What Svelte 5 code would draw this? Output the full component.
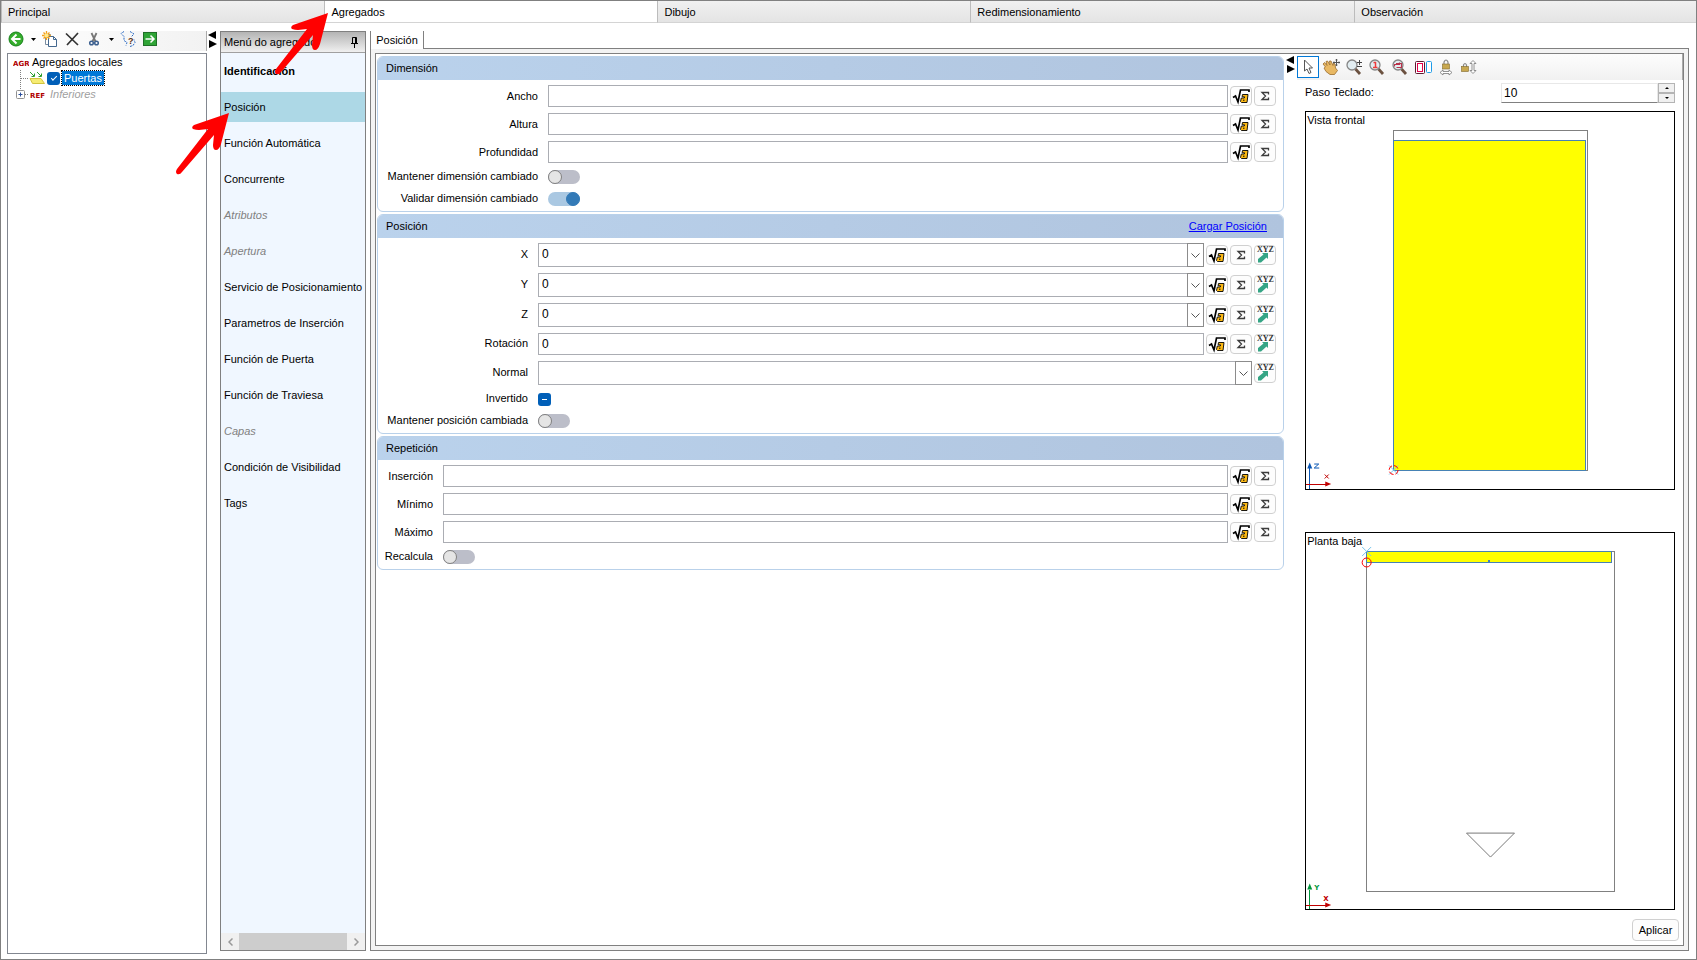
<script>
  const tabs = [
    { name: 'Principal', size: 323 },
    { name: 'Agregados', size: 333 },
    { name: 'Dibujo', size: 312 },
    { name: 'Redimensionamiento', size: 386 },
    { name: 'Observación', size: 342 }
  ];

  const menu = [
    { name: 'Identificación', bold: true },
    { name: 'Posición' },
    { name: 'Función Automática' },
    { name: 'Concurrente' },
    { name: 'Atributos', disabled: true },
    { name: 'Apertura', disabled: true },
    { name: 'Servicio de Posicionamiento' },
    { name: 'Parametros de Inserción' },
    { name: 'Función de Puerta' },
    { name: 'Función de Traviesa' },
    { name: 'Capas', disabled: true },
    { name: 'Condición de Visibilidad' },
    { name: 'Tags' }
  ];

  // type: text, combo, toggle or check
  const dimension = [
    { id: 'ancho', label: 'Ancho', type: 'text', value: '', tools: ['root', 'sum'] },
    { id: 'altura', label: 'Altura', type: 'text', value: '', tools: ['root', 'sum'] },
    { id: 'profundidad', label: 'Profundidad', type: 'text', value: '', tools: ['root', 'sum'] },
    { id: 'mantener-dim', label: 'Mantener dimensión cambiado', type: 'toggle', value: false },
    { id: 'validar-dim', label: 'Validar dimensión cambiado', type: 'toggle', value: true }
  ];

  const position = [
    { id: 'x', label: 'X', type: 'combo', value: '0', tools: ['root', 'sum', 'xyz'] },
    { id: 'y', label: 'Y', type: 'combo', value: '0', tools: ['root', 'sum', 'xyz'] },
    { id: 'z', label: 'Z', type: 'combo', value: '0', tools: ['root', 'sum', 'xyz'] },
    { id: 'rotacion', label: 'Rotación', type: 'text', value: '0', tools: ['root', 'sum', 'xyz'] },
    { id: 'normal', label: 'Normal', type: 'combo', value: '', tools: ['xyz'] },
    { id: 'invertido', label: 'Invertido', type: 'check' },
    { id: 'mantener-pos', label: 'Mantener posición cambiada', type: 'toggle', value: false }
  ];

  const repetition = [
    { id: 'insercion', label: 'Inserción', type: 'text', value: '', tools: ['root', 'sum'] },
    { id: 'minimo', label: 'Mínimo', type: 'text', value: '', tools: ['root', 'sum'] },
    { id: 'maximo', label: 'Máximo', type: 'text', value: '', tools: ['root', 'sum'] },
    { id: 'recalcula', label: 'Recalcula', type: 'toggle', value: false }
  ];

  const toolNames = { root: 'Fórmula', sum: 'Sumatoria', xyz: 'Coordenadas' };
  const viewTools = ['pointer', 'hand', 'zoom', 'zoom-one', 'zoom-fit', 'panels', 'lock-x', 'lock-y'];

  let activeTab = $state('Agregados');
  let activeItem = $state('Posición');
  let activeTool = $state('pointer');
  let step = $state(10);
</script>

{#snippet toolIcon(tool)}
  {#if tool === 'root'}
    <svg width="18" height="18" viewBox="0 0 18 18">
      <path d="M1 10.500l2.500-1.500 2.500 6L8.500 3H17v2" fill="none" stroke="#000" stroke-width="1.700" />
      <path d="M10.500 7.500h5.500l-1 8H9.500l-1-1 .8-3.500h3l.3-1.200h-2.500z" fill="#fdb913" stroke="#000" stroke-width=".9" />
      <path d="M11 13.200h1.500" stroke="#000" />
    </svg>
  {:else if tool === 'sum'}
    <svg width="18" height="18" viewBox="0 0 18 18">
      <path d="M12.500 7.500V5.500H6L9.500 9L6 12.500H12.500V10.500" fill="none" stroke="#3c3c3c" stroke-width="1.300" />
    </svg>
  {:else}
    <svg width="20" height="18" viewBox="0 0 20 18">
      <path d="M7 7h6v6l-1.500-1.500L6 16.500H3V13l5.500-4.500z" fill="#35a585" />
      <text x="2" y="6" class="xyz">XYZ</text>
    </svg>
  {/if}
{/snippet}

{#snippet glass()}
  <path d="M10.500 11l4.500 5" stroke="#6b5140" stroke-width="2.800" />
  <circle cx="7" cy="7" r="5" fill="#e2edf1" stroke="#858585" stroke-width="1.300" />
{/snippet}

{#snippet viewIcon(name)}
  <svg width="18" height="18" viewBox="0 0 18 18">
    {#if name === 'pointer'}
      <path d="M5.500 2v11l2.500-2 2 4.500 2-1-2-4.500h3.500z" fill="#fff" stroke="#555" />
    {:else if name === 'hand'}
      <path d="M1 6l1.500-1.500L5 7.500 4 3.500 5.500 3 8 7 7.500 3 9 3l2 4.500L11.500 5 13 6l.5 4 2 2.500-3 4L8 16.500 4 13.500 2 10l1.500-1z" fill="#e8b863" stroke="#9a6c2c" stroke-width=".8" />
      <path d="M14.500 1v7M11 4.500h7M13.500 2h2M13.500 7h2M12 3.500v2M17 3.500v2" stroke="#555" />
    {:else if name === 'zoom'}
      {@render glass()}
      <path d="M12 4.500h5M14.500 2v5M12 8.500h5" stroke="#444" />
    {:else if name === 'zoom-one'}
      {@render glass()}
      <path d="M5.500 4.500H7.500V9M5 9.500h4.500" fill="none" stroke="#ee3b3b" stroke-width="1.500" />
    {:else if name === 'zoom-fit'}
      {@render glass()}
      <path d="M3.500 8.500v-2h5v-2M5.500 9.500h5v-4H5" fill="none" stroke="#b8324a" stroke-width="1.200" />
    {:else if name === 'panels'}
      <rect x="1.500" y="3.500" width="9" height="12" rx="1" fill="#fff" stroke="#5b1a30" />
      <rect x="3.500" y="5.500" width="5" height="8" fill="#fff" stroke="#e5004b" />
      <rect x="12.500" y="3.500" width="5" height="11" rx="1" fill="#fff" stroke="#1d9be8" />
    {:else if name === 'lock-x'}
      <path d="M7 6.500V4q2-4 4 0v2.500" fill="none" stroke="#888" stroke-width="1.200" />
      <rect x="5.500" y="6" width="7" height="5" fill="#c8a850" stroke="#80692c" stroke-width=".6" />
      <path d="M3 14.500l3-2.500v1.500h6V12l3 2.500-3 2.500v-1.500H6V17z" fill="#fff" stroke="#777" stroke-width=".8" />
    {:else}
      <path d="M3.500 9V7q1.500-3 3 0v2" fill="none" stroke="#888" stroke-width="1.200" />
      <rect x="1.500" y="8.500" width="7" height="5" fill="#c8a850" stroke="#80692c" stroke-width=".6" />
      <path d="M13 2.500l3 3h-2v7h2l-3 3-3-3h2v-7h-2z" fill="#fff" stroke="#777" stroke-width=".8" />
    {/if}
  </svg>
{/snippet}

{#snippet caret()}
  <svg width="5" height="3" viewBox="0 0 5 3"><path d="M0 0h5L2.500 3z" /></svg>
{/snippet}

{#snippet splitter()}
  <svg width="9" height="18" viewBox="0 0 9 18"><path d="M8 0v8L0 4zM1 9v8l8-4z" /></svg>
{/snippet}

{#snippet rows(list)}
  {#each list as row}
    <div class="row {row.type}">
      <label for={row.id}>{row.label}</label>
      {#if row.type === 'text'}
        <input id={row.id} type="text" value={row.value} />
      {:else if row.type === 'combo'}
        <div class="select">
          <select id={row.id}>
            <option>{row.value}</option>
          </select>
          <span class="drop">
            <svg width="9" height="5" viewBox="0 0 9 5"><path d="M.5.5l4 4 4-4" fill="none" stroke="#555" /></svg>
          </span>
        </div>
      {:else if row.type === 'toggle'}
        <input id={row.id} class="switch" type="checkbox" role="switch" checked={row.value} />
      {:else}
        <input id={row.id} class="tri" type="checkbox" indeterminate />
      {/if}
      {#each row.tools ?? [] as tool}
        <button type="button" class="tool" aria-label={toolNames[tool]}>{@render toolIcon(tool)}</button>
      {/each}
    </div>
  {/each}
{/snippet}

<div class="app">
  <nav class="tabs">
    {#each tabs as tab}
      <button class:active={activeTab === tab.name} style="flex-grow: {tab.size}" onclick={() => (activeTab = tab.name)}>{tab.name}</button>
    {/each}
  </nav>

  <div class="body">
    <aside class="left">
      <div class="toolbar">
        <button aria-label="Volver">
          <svg width="16" height="16" viewBox="0 0 16 16">
            <circle cx="8" cy="8" r="7" fill="#35ad2c" stroke="#16801a" />
            <path d="M8.500 3.500L4 8l4.500 4.500M4 8h8.500" fill="none" stroke="#fff" stroke-width="2" />
          </svg>
        </button>
        <button class="caret" aria-label="Opciones de volver">{@render caret()}</button>
        <button aria-label="Nuevo">
          <svg width="16" height="16" viewBox="0 0 16 16">
            <path d="M3.500 3.500h5v10h-5z" fill="#fff" stroke="#7a8ca0" />
            <path d="M6.500 5.500h5l3 3v7h-8z" fill="#fff" stroke="#44688f" />
            <path d="M11.500 5.500v3h3" fill="none" stroke="#44688f" />
            <path d="M4.500 0v9M0 4.500h9M1.500 1.500l6 6M7.500 1.500l-6 6" stroke="#f3a01c" stroke-width="1.300" />
            <circle cx="4.500" cy="4.500" r="2" fill="#ffe98a" />
          </svg>
        </button>
        <button aria-label="Eliminar">
          <svg width="16" height="16" viewBox="0 0 16 16">
            <path d="M2 2.500l12 11.500M14 2L3 14" fill="none" stroke="#333" stroke-width="1.700" />
          </svg>
        </button>
        <button aria-label="Cortar">
          <svg width="16" height="16" viewBox="0 0 16 16">
            <path d="M5.500 2l4 8.500M10.500 2l-4 8.500" stroke="#777" stroke-width="1.800" />
            <circle cx="5.500" cy="12" r="1.800" fill="none" stroke="#3b5f8f" stroke-width="1.500" />
            <circle cx="10.500" cy="12" r="1.800" fill="none" stroke="#3b5f8f" stroke-width="1.500" />
          </svg>
        </button>
        <button class="caret" aria-label="Opciones de cortar">{@render caret()}</button>
        <button aria-label="Expresión">
          <svg width="16" height="16" viewBox="0 0 16 16">
            <path d="M4 .5L1 2.500l3 3v4l3 2-1 3M10 .5l4 2.500-3 3" fill="none" stroke="#2869c4" stroke-dasharray="2 1" />
            <path d="M10 15.500l3-1 2-3-1-3" fill="none" stroke="#2869c4" stroke-dasharray="2 1" />
            <text x="8" y="13" class="ask">?</text>
          </svg>
        </button>
        <button aria-label="Avanzar">
          <svg width="16" height="16" viewBox="0 0 16 16">
            <rect x="1.500" y="1.500" width="13" height="13" fill="#2fa436" stroke="#1f6f27" />
            <path d="M3.500 8h8M8.500 4.500L12 8l-3.500 3.500" fill="none" stroke="#fff" stroke-width="1.500" />
          </svg>
        </button>
      </div>

      <div class="tree">
        <div class="node">
          <svg width="16" height="16" viewBox="0 0 16 16"><text x="0" y="12" class="tag">AGR</text></svg>
          <span>Agregados locales</span>
        </div>
        <div class="node child">
          <svg width="12" height="16" viewBox="0 0 12 16"><path d="M4.500 0v16M5 8.500h7" fill="none" stroke="#808080" stroke-dasharray="1 1" /></svg>
          <svg width="16" height="16" viewBox="0 0 16 16">
            <path d="M1 8.500h11l3.500 5h-12z" fill="#f6ec72" stroke="#d2c440" />
            <path d="M1 2l4 4M2.500 6.500H5.500V3.500M8 2l4 4M9.500 6.500h3V3.500" fill="none" stroke="#2e9e2e" />
          </svg>
          <input id="puertas" type="checkbox" class="tick" checked />
          <label for="puertas" class="selected">Puertas</label>
        </div>
        <div class="node child">
          <svg width="13" height="16" viewBox="0 0 13 16">
            <path d="M4.500 0v4M9 8.500h4" fill="none" stroke="#808080" stroke-dasharray="1 1" />
            <rect x=".5" y="4.500" width="8" height="8" rx="1" fill="#fff" stroke="#919191" />
            <path d="M2.500 8.500h4M4.500 6.500v4" stroke="#2b4f9c" />
          </svg>
          <svg width="17" height="16" viewBox="0 0 17 16"><text x="0" y="12" class="tag">REF</text></svg>
          <span class="muted">Inferiores</span>
        </div>
      </div>
    </aside>

    <div class="splitter">{@render splitter()}</div>

    <aside class="menu">
      <header>
        <span>Menú do agregado</span>
        <button aria-label="Fijar">
          <svg width="9" height="11" viewBox="0 0 9 11"><path d="M2.500 6V.5h4V6M5.500 1v5M1 6.500h7M4.500 7v4" fill="none" stroke="#000" /></svg>
        </button>
      </header>
      <ul>
        {#each menu as item}
          <li>
            <button
              class:active={activeItem === item.name}
              class:bold={item.bold}
              disabled={item.disabled}
              onclick={() => (activeItem = item.name)}>{item.name}</button>
          </li>
        {/each}
      </ul>
      <div class="scroll">
        <button aria-label="Izquierda"><svg width="5" height="8" viewBox="0 0 5 8"><path d="M4.500.5L1 4l3.500 3.500" fill="none" stroke="#999" stroke-width="1.500" /></svg></button>
        <span></span>
        <button aria-label="Derecha"><svg width="5" height="8" viewBox="0 0 5 8"><path d="M.5.5L4 4 .5 7.500" fill="none" stroke="#999" stroke-width="1.500" /></svg></button>
      </div>
    </aside>

    <main>
      <div class="subtabs">
        <button>Posición</button>
        <span></span>
      </div>
      <div class="frame">
        <div class="inner">
          <form>
            <section class="wide">
              <h2>Dimensión</h2>
              <div class="rows">{@render rows(dimension)}</div>
            </section>
            <section class="mid">
              <h2>Posición <a href="#cargar">Cargar Posición</a></h2>
              <div class="rows">{@render rows(position)}</div>
            </section>
            <section class="narrow">
              <h2>Repetición</h2>
              <div class="rows">{@render rows(repetition)}</div>
            </section>
          </form>

          <div class="splitter inside">{@render splitter()}</div>

          <div class="preview">
            <div class="view-tools">
              {#each viewTools as name}
                <button class:active={activeTool === name} aria-label={name} onclick={() => (activeTool = name)}>{@render viewIcon(name)}</button>
              {/each}
            </div>
            <div class="views">
              <div class="step">
                <label for="step">Paso Teclado:</label>
                <input id="step" type="number" bind:value={step} />
                <div class="spin">
                  <button aria-label="Aumentar" onclick={() => step++}><svg width="4" height="2" viewBox="0 0 4 2"><path d="M0 2h4L2 0z" /></svg></button>
                  <button aria-label="Disminuir" onclick={() => step--}><svg width="4" height="2" viewBox="0 0 4 2"><path d="M0 0h4L2 2z" /></svg></button>
                </div>
              </div>

              <div class="view">
                <svg viewBox="1 1 368 377">
                  <text x="2" y="13" class="title">Vista frontal</text>
                  <g shape-rendering="crispEdges" fill="none">
                    <rect x="88.500" y="19.500" width="194" height="340" stroke="#808080" />
                    <rect x="88.500" y="29.500" width="192" height="330" fill="#ff0" stroke="#4682b4" />
                    <path d="M4.500 378V355" stroke="#0a56b4" />
                    <path d="M1 373.500h20" stroke="#c00000" />
                  </g>
                  <path d="M84 355l9 9M93 355l-9 9" stroke="#78c4ea" />
                  <circle cx="88.500" cy="359.500" r="4.500" fill="none" stroke="#f00" stroke-dasharray="5 2" />
                  <path d="M2 358l2.500-6 2.500 6z" fill="#0a56b4" />
                  <path d="M20 371v5l6-2.500z" fill="#c00000" />
                  <path d="M9 353.500h4.500l-4.500 4h5" class="axis z" />
                  <path d="M19.500 364l4 4M23.500 364l-4 4" class="axis x" />
                </svg>
              </div>

              <div class="view">
                <svg viewBox="1 1 368 377">
                  <text x="2" y="13" class="title">Planta baja</text>
                  <g shape-rendering="crispEdges" fill="none">
                    <rect x="61.500" y="19.500" width="248" height="340" stroke="#808080" />
                    <rect x="61.500" y="19.500" width="245" height="11" fill="#ff0" stroke="#4682b4" />
                    <rect x="183" y="28" width="2" height="2" fill="#4682b4" />
                    <path d="M4.500 378V358" stroke="#00963c" />
                    <path d="M1 373.500h20" stroke="#c00000" />
                  </g>
                  <path d="M161.500 301.500h48l-24 24z" fill="none" stroke="#777" />
                  <path d="M57 15l9 9M66 15l-9 9" stroke="#78c4ea" />
                  <circle cx="61.500" cy="30.500" r="4.500" fill="none" stroke="#f00" />
                  <path d="M2 358l2.500-6 2.500 6z" fill="#00963c" />
                  <path d="M20 371v5l6-2.500z" fill="#c00000" />
                  <text x="9" y="358" class="mark y">Y</text>
                  <text x="18" y="369" class="mark x">X</text>
                </svg>
              </div>
            </div>
            <button class="apply">Aplicar</button>
          </div>
        </div>
      </div>
    </main>
  </div>

  <!-- guide arrows over the tab and the menu item -->
  <svg class="guide first" width="54" height="62" viewBox="0 0 54 62">
    <path d="M53 0L18 12q-3 2-1 4 3 1 6 1l9-1L1 56q-2 3 0 5 3 1 5-2L38 22l-1 10q0 5 3 5 3 0 5-6z" />
  </svg>
  <svg class="guide second" width="54" height="62" viewBox="0 0 54 62">
    <path d="M53 0L18 12q-3 2-1 4 3 1 6 1l9-1L1 56q-2 3 0 5 3 1 5-2L38 22l-1 10q0 5 3 5 3 0 5-6z" />
  </svg>
</div>

<style>
  :global(body) {
    margin: 0;
    background: #fff;
  }

  .app {
    position: relative;
    display: flex;
    flex-direction: column;
    min-height: 100vh;
    box-sizing: border-box;
    border: 1px solid #808080;
    font-family: 'Liberation Sans', Arial, sans-serif;
    font-size: 11px;
    line-height: 14px;
    color: #000;
  }

  button, input, select {
    font: inherit;
    color: inherit;
    margin: 0;
    padding: 0;
    border: 0;
    border-radius: 0;
    background: none;
    box-sizing: border-box;
  }

  svg {
    display: block;
    flex: none;
  }

  .tabs {
    display: flex;
    height: 22px;
  }

  .tabs button {
    flex-basis: 0;
    padding: 0 6px;
    text-align: left;
    background: linear-gradient(#f0f0f0, #e4e4e4);
    border-left: 1px solid #bcbcbc;
    border-bottom: 1px solid #d4d4d4;
  }

  .tabs button.active {
    background: #fff;
  }

  .body {
    flex: 1;
    display: flex;
    padding: 8px 7px 5px 4px;
  }

  .left {
    display: flex;
    flex-direction: column;
    width: 202px;
  }

  .toolbar {
    display: flex;
    align-items: flex-start;
    height: 20px;
    margin-bottom: 2px;
    background: linear-gradient(90deg, #fff, #f2f2f2);
    border-right: 1px solid #aaa;
  }

  .toolbar button {
    display: flex;
    align-items: center;
    justify-content: center;
    width: 22px;
    height: 16px;
  }

  .toolbar button.caret {
    width: 12px;
  }

  .ask {
    font-size: 9px;
    font-weight: bold;
    fill: #5a2d0c;
  }

  .tree {
    flex: 1;
    margin-left: 2px;
    padding-left: 5px;
    border: 1px solid #828790;
  }

  .node {
    display: flex;
    align-items: center;
    gap: 2px;
    height: 16px;
  }

  .node:first-child {
    gap: 3px;
  }

  .node.child {
    padding-left: 3px;
    gap: 1px;
  }

  .node.child .muted {
    padding-left: 2px;
  }

  .tag {
    font-family: 'DejaVu Sans', sans-serif;
    font-size: 7px;
    font-weight: bold;
    fill: #b00000;
  }

  .selected {
    padding: 0 2px;
    background: #0078d7;
    color: #fff;
    outline: 1px dotted #000;
  }

  .muted {
    font-style: italic;
    color: #a0a0a0;
  }

  .tick, .tri {
    appearance: none;
    display: grid;
    place-items: center;
    width: 13px;
    height: 13px;
    border-radius: 3px;
    background: #005fb8;
  }

  .tick {
    margin: 0 1px;
  }

  .tick::before {
    content: '';
    width: 5px;
    height: 2px;
    margin-bottom: 2px;
    border: solid #fff;
    border-width: 0 0 1px 1px;
    transform: rotate(-45deg);
  }

  .tri::before {
    content: '';
    width: 5px;
    height: 1px;
    background: #fff;
  }

  .splitter {
    width: 13px;
    box-sizing: border-box;
    padding-left: 1px;
  }

  .menu {
    display: flex;
    flex-direction: column;
    width: 146px;
    margin: 0 4px 3px 0;
    box-sizing: border-box;
    border: 1px solid #808080;
    background: #f0f7ff;
  }

  .menu header {
    display: flex;
    align-items: center;
    justify-content: space-between;
    height: 20px;
    padding: 0 6px 0 3px;
    background: linear-gradient(#b4b4b4, #f0f0f0);
    border-bottom: 1px solid #a0a0a0;
  }

  .menu ul {
    flex: 1;
    display: flex;
    flex-direction: column;
    gap: 6px;
    margin: 0;
    padding: 3px 0;
    list-style: none;
  }

  .menu li button {
    display: block;
    width: 100%;
    height: 30px;
    padding-left: 3px;
    text-align: left;
    white-space: nowrap;
  }

  .menu li button.active {
    background: #add8e6;
  }

  .menu li button.bold {
    font-weight: bold;
  }

  .menu li button:disabled {
    font-style: italic;
    color: #808080;
  }

  .scroll {
    display: flex;
    height: 17px;
    background: #f0f0f0;
  }

  .scroll button {
    display: grid;
    place-items: center;
    width: 18px;
  }

  .scroll span {
    flex: 1;
    background: #cdcdcd;
  }

  main {
    flex: 1;
    min-width: 0;
    display: flex;
    flex-direction: column;
    margin-bottom: 3px;
  }

  .subtabs {
    display: flex;
    height: 18px;
  }

  .subtabs button {
    width: 54px;
    padding-bottom: 1px;
    border: solid #808080;
    border-width: 0 1px;
  }

  .subtabs span {
    flex: 1;
    border-bottom: 1px solid #808080;
  }

  .frame {
    flex: 1;
    display: flex;
    padding: 4px;
    border: solid #808080;
    border-width: 0 1px 1px;
    background: #f3f3f3;
  }

  .inner {
    flex: 1;
    min-width: 0;
    display: flex;
    border: 1px solid #808080;
    background: #fff;
  }

  form {
    flex: 1;
    min-width: 0;
    display: flex;
    flex-direction: column;
    gap: 2px;
    padding: 2px 0 0 1px;
  }

  section {
    border: 1px solid #b9d1ea;
    border-radius: 6px;
    overflow: hidden;
  }

  h2 {
    display: flex;
    align-items: center;
    justify-content: space-between;
    height: 23px;
    box-sizing: border-box;
    margin: 0;
    padding: 0 16px 2px 8px;
    font-size: 11px;
    font-weight: normal;
    background: linear-gradient(90deg, #bad2ec, #b0c4de);
  }

  h2 a {
    color: #00f;
  }

  .rows {
    display: flex;
    flex-direction: column;
    gap: 6px;
    padding: 5px 7px 4px 0;
  }

  .row {
    display: flex;
    align-items: center;
    gap: 2px;
    height: 22px;
  }

  .row.combo {
    height: 24px;
  }

  .row.toggle, .row.check {
    height: 16px;
  }

  .row label {
    flex: none;
    width: 160px;
    padding-right: 8px;
    text-align: right;
    white-space: nowrap;
  }

  .mid .row label {
    width: 150px;
  }

  .narrow .row label {
    width: 55px;
  }

  .mid .row label, .toggle label {
    padding-bottom: 2px;
  }

  .row input[type='text'] {
    flex: 1;
    min-width: 0;
    height: 22px;
    padding: 0 3px;
    border: 1px solid #abadb3;
    font-size: 12px;
  }

  /* the arrow box shares the cell with the select */
  .select {
    flex: 1;
    display: grid;
    grid-template-columns: 1fr 17px;
    height: 24px;
  }

  .select select {
    grid-area: 1 / 1 / 2 / 3;
    appearance: none;
    padding: 0 3px 2px;
    border: 1px solid #abadb3;
    font-size: 12px;
  }

  .select .drop {
    grid-area: 1 / 2;
    display: grid;
    place-items: center;
    border: 1px solid #8c8c8c;
    pointer-events: none;
  }

  .switch {
    appearance: none;
    display: flex;
    width: 32px;
    height: 14px;
    border-radius: 7px;
    background: #bcbec9;
  }

  .switch::before {
    content: '';
    width: 14px;
    height: 14px;
    box-sizing: border-box;
    border: 1px solid #808080;
    border-radius: 50%;
    background: #e5e5e5;
  }

  .switch:checked {
    justify-content: flex-end;
    background: #aac8e2;
  }

  .switch:checked::before {
    border-color: #337ab7;
    background: #337ab7;
  }

  .tool {
    display: grid;
    place-items: center;
    width: 22px;
    height: 20px;
    border: 1px solid #d0d0d0;
    border-radius: 4px;
    background: #fdfdfd;
  }

  .xyz {
    font-family: 'Liberation Serif', serif;
    font-size: 8px;
    font-weight: bold;
    fill: #333;
  }

  .splitter.inside {
    padding: 2px 0 0 2px;
  }

  .preview {
    display: flex;
    flex-direction: column;
    width: 386px;
  }

  .view-tools {
    display: flex;
    gap: 1px;
    height: 26px;
    box-sizing: border-box;
    padding: 2px 0;
    background: linear-gradient(#fdfdfd, #f1f1f1);
    border-right: 1px solid #aaa;
  }

  .view-tools button {
    display: grid;
    place-items: center;
    width: 22px;
    border: 1px solid transparent;
  }

  .view-tools button.active {
    border-color: #0078d7;
    background: #fff;
  }

  .views {
    flex: 1;
    display: flex;
    flex-direction: column;
    padding: 3px 8px 9px;
  }

  .step {
    display: flex;
    height: 20px;
    margin-bottom: 8px;
  }

  .step label {
    flex: 1;
    padding-top: 2px;
  }

  .step input {
    appearance: textfield;
    width: 157px;
    padding: 0 2px;
    border: 1px solid #e8e8e8;
    border-bottom-color: #808080;
    font-size: 12px;
  }

  .step input::-webkit-inner-spin-button {
    appearance: none;
  }

  .spin {
    display: grid;
    width: 17px;
  }

  .spin button {
    display: grid;
    place-items: center;
    border: 1px solid #b4b4b4;
    background: #f0f0f0;
  }

  .view {
    flex: 1 0 0;
    display: flex;
    min-height: 300px;
    box-sizing: border-box;
    border: 1px solid #000;
  }

  .view + .view {
    margin-top: 42px;
  }

  .view svg {
    flex: 1;
    min-width: 0;
  }

  .title {
    font-size: 11px;
  }

  .axis {
    fill: none;
  }

  .axis.x {
    stroke: #c00000;
  }

  .axis.z {
    stroke: #0a56b4;
  }

  .mark {
    font-family: 'DejaVu Sans', sans-serif;
    font-size: 7px;
    font-weight: bold;
  }

  .mark.x {
    fill: #c00000;
  }

  .mark.y {
    fill: #00963c;
  }

  .apply {
    align-self: flex-end;
    width: 47px;
    height: 22px;
    margin: 0 4px 4px 0;
    border: 1px solid #d0d0d0;
    border-radius: 4px;
    background: #fdfdfd;
  }

  .guide {
    position: absolute;
    fill: #f00;
    pointer-events: none;
  }

  .guide.first {
    left: 274px;
    top: 12px;
  }

  .guide.second {
    left: 175px;
    top: 112px;
  }
</style>
